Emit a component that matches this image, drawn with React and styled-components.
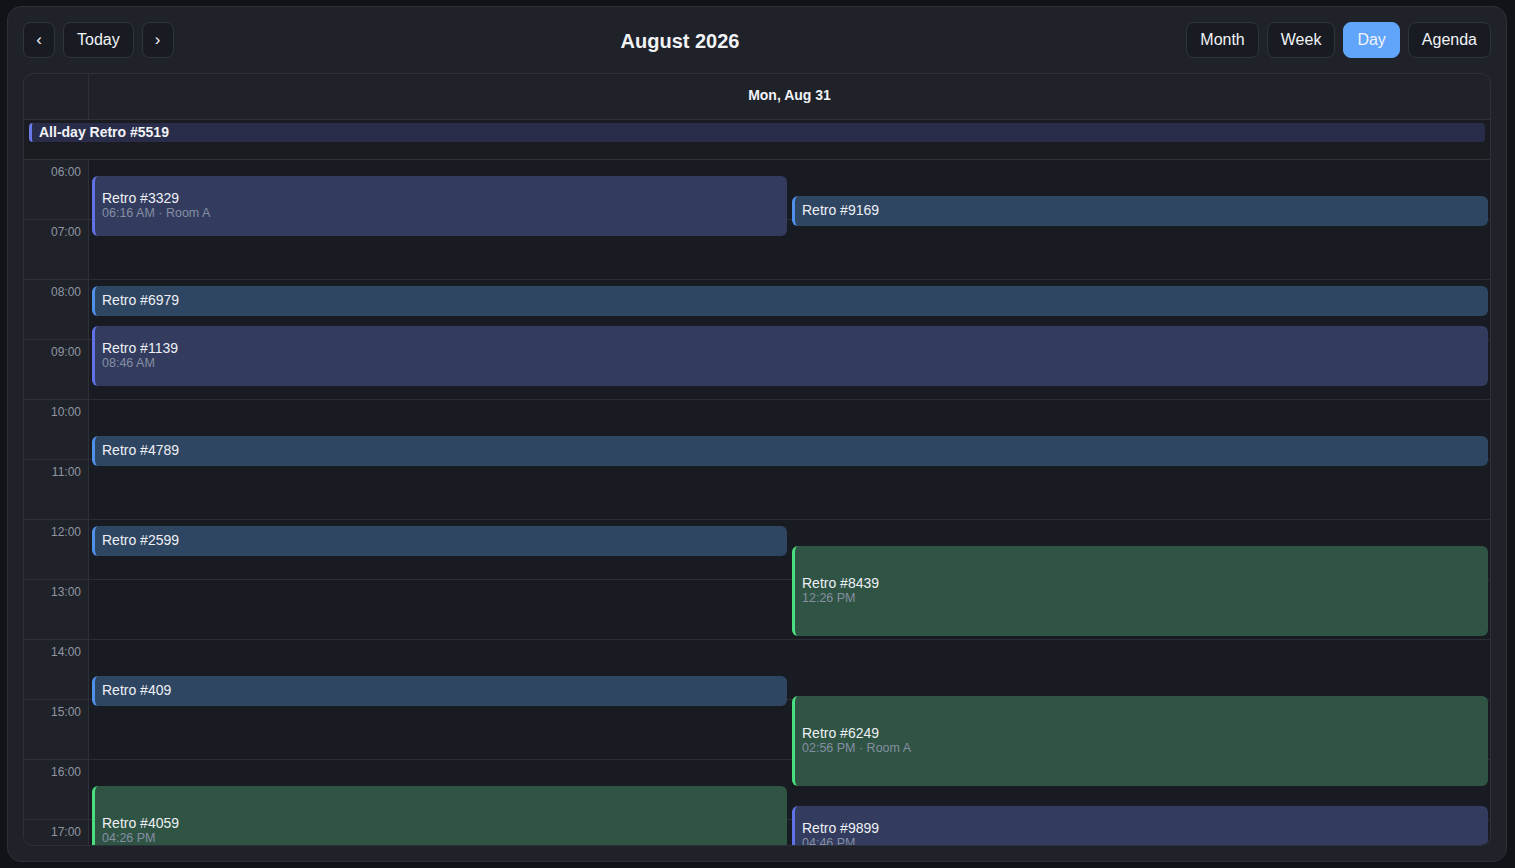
import React from "react";
import styled, { createGlobalStyle } from "styled-components";

const Global = createGlobalStyle`
  * { box-sizing: border-box; }
  html, body { margin: 0; padding: 0; background: #111318; }
  body { font-family: "Liberation Sans", Arial, sans-serif; color: #e8eaf0; }
`;

const Page = styled.div`
  padding: 6px 8px 6px 7px;
  height: 868px;
`;

const Card = styled.div`
  height: 856px;
  background: #1f2229;
  border: 1px solid #2c2f36;
  border-radius: 14px;
  padding: 15px;
  display: flex;
  flex-direction: column;
  gap: 15px;
`;

const Toolbar = styled.div`
  display: flex;
  align-items: center;
  height: 36px;
`;

const Group = styled.div`
  display: flex;
  gap: 8px;
`;

const Btn = styled.button`
  height: 36px;
  min-width: 32px;
  padding: 0 ${(p) => (p.$icon ? "0" : "13px")};
  border-radius: 8px;
  border: 1px solid ${(p) => (p.$active ? "#60a5fa" : "#30343b")};
  background: ${(p) => (p.$active ? "#60a5fa" : "#181b21")};
  color: #f1f3f7;
  font-family: "Liberation Sans", Arial, sans-serif;
  font-size: ${(p) => (p.$icon ? "17px" : "16px")};
  display: flex;
  align-items: center;
  justify-content: center;
  cursor: pointer;
`;

const Title = styled.div`
  flex: 1;
  font-size: 20px;
  font-weight: 700;
  color: #f1f3f7;
  text-align: center;
  padding-top: 2px;
`;

const Calendar = styled.div`
  flex: 1;
  min-height: 0;
  border: 1px solid #2e3139;
  border-radius: 10px;
  overflow: hidden;
  display: flex;
  flex-direction: column;
`;

const HeaderRow = styled.div`
  display: flex;
  height: 46px;
  flex-shrink: 0;
  border-bottom: 1px solid #2e3139;
`;

const GutterHead = styled.div`
  width: 65px;
  border-right: 1px solid #2e3139;
`;

const DayHead = styled.div`
  flex: 1;
  display: flex;
  align-items: center;
  justify-content: center;
  font-size: 14px;
  font-weight: 700;
  color: #f1f3f7;
  padding-bottom: 4px;
`;

const AllDayRow = styled.div`
  height: 40px;
  flex-shrink: 0;
  background: #1a1c22;
  border-bottom: 1px solid #2e3139;
  padding: 3px 5px 0 5px;
`;

const AllDayEvent = styled.div`
  height: 19px;
  background: #2a2d4a;
  border-left: 3px solid #6a78e8;
  border-radius: 4px;
  padding: 0 0 2px 7px;
  font-size: 14px;
  font-weight: 700;
  color: #f1f3f7;
  display: flex;
  align-items: center;
`;

const Grid = styled.div`
  flex: 1;
  min-height: 0;
  overflow: hidden;
  display: flex;
`;

const Gutter = styled.div`
  width: 65px;
  flex-shrink: 0;
  background: #1f2229;
  border-right: 1px solid #2e3139;
`;

const TimeCell = styled.div`
  height: 60px;
  border-bottom: 1px solid #2e3139;
  text-align: right;
  padding: 5px 7px 0 0;
  font-size: 12px;
  color: #8f96a3;
`;

const DayCol = styled.div`
  flex: 1;
  position: relative;
  background: #181b21;
`;

const Slot = styled.div`
  height: 60px;
  border-bottom: 1px solid #2b2e35;
`;

const palette = {
  indigo: { bg: "#333c5f", bd: "#6172e6" },
  blue: { bg: "#2f4662", bd: "#4f90ea" },
  green: { bg: "#2f5444", bd: "#4ade80" },
};

const Event = styled.div`
  position: absolute;
  left: ${(p) => (p.$col === "right" ? "calc(50% + 2.5px)" : "3px")};
  right: ${(p) => (p.$col === "left" ? "calc(50% + 2.5px)" : "2px")};
  background: ${(p) => palette[p.$color].bg};
  border-left: 3px solid ${(p) => palette[p.$color].bd};
  border-radius: 6px;
  padding: 0 7px 2px;
  display: flex;
  flex-direction: column;
  justify-content: center;
  overflow: hidden;
`;

const EvTitle = styled.div`
  font-size: 14px;
  color: #eef0f5;
  line-height: 16px;
`;

const EvSub = styled.div`
  font-size: 12.5px;
  color: #858ea2;
  line-height: 14px;
`;

const hours = ["06:00","07:00","08:00","09:00","10:00","11:00","12:00","13:00","14:00","15:00","16:00","17:00"];

const events = [
  { t: "Retro #3329", s: "06:16 AM · Room A", start: 16, dur: 60, col: "left", color: "indigo" },
  { t: "Retro #9169", start: 36, dur: 30, col: "right", color: "blue" },
  { t: "Retro #6979", start: 126, dur: 30, col: "full", color: "blue" },
  { t: "Retro #1139", s: "08:46 AM", start: 166, dur: 60, col: "full", color: "indigo" },
  { t: "Retro #4789", start: 276, dur: 30, col: "full", color: "blue" },
  { t: "Retro #2599", start: 366, dur: 30, col: "left", color: "blue" },
  { t: "Retro #8439", s: "12:26 PM", start: 386, dur: 90, col: "right", color: "green" },
  { t: "Retro #409", start: 516, dur: 30, col: "left", color: "blue" },
  { t: "Retro #6249", s: "02:56 PM · Room A", start: 536, dur: 90, col: "right", color: "green" },
  { t: "Retro #4059", s: "04:26 PM", start: 626, dur: 90, col: "left", color: "green" },
  { t: "Retro #9899", s: "04:46 PM", start: 646, dur: 60, col: "right", color: "indigo" },
];

export default function App() {
  return (
    <>
      <Global />
      <Page>
        <Card>
          <Toolbar>
            <Group>
              <Btn $icon>‹</Btn>
              <Btn>Today</Btn>
              <Btn $icon>›</Btn>
            </Group>
            <Title>August 2026</Title>
            <Group>
              <Btn>Month</Btn>
              <Btn>Week</Btn>
              <Btn $active>Day</Btn>
              <Btn>Agenda</Btn>
            </Group>
          </Toolbar>
          <Calendar>
            <HeaderRow>
              <GutterHead />
              <DayHead>Mon, Aug 31</DayHead>
            </HeaderRow>
            <AllDayRow>
              <AllDayEvent>All-day Retro #5519</AllDayEvent>
            </AllDayRow>
            <Grid>
              <Gutter>
                {hours.map((h) => (
                  <TimeCell key={h}>{h}</TimeCell>
                ))}
              </Gutter>
              <DayCol>
                {hours.map((h) => (
                  <Slot key={h} />
                ))}
                {events.map((e) => (
                  <Event
                    key={e.t}
                    $col={e.col}
                    $color={e.color}
                    style={{ top: e.start, height: e.dur }}
                  >
                    <EvTitle>{e.t}</EvTitle>
                    {e.s && <EvSub>{e.s}</EvSub>}
                  </Event>
                ))}
              </DayCol>
            </Grid>
          </Calendar>
        </Card>
      </Page>
    </>
  );
}
